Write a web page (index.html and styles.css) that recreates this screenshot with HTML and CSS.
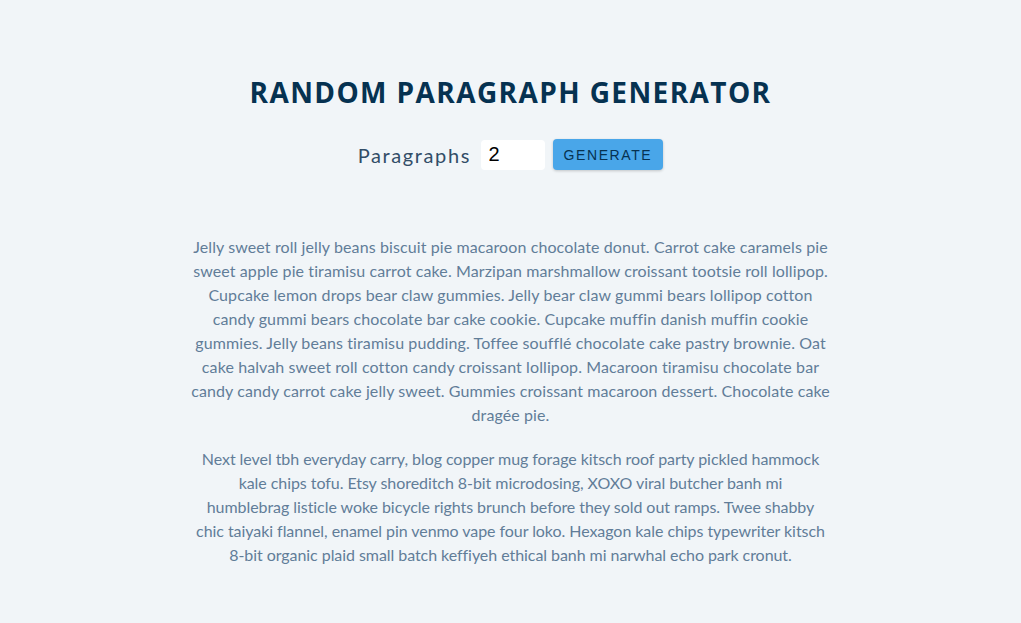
FILE: index.html
```html
<!DOCTYPE html>
<html lang="en">
<head>
<meta charset="utf-8">
<title>Random Paragraph Generator</title>
<link rel="stylesheet" href="styles.css">
</head>
<body>
<section class="section-center">
  <h3 class="title">Random Paragraph Generator</h3>
  <form class="lorem-form">
    <label for="amount" class="label">Paragraphs</label>
    <input type="number" id="amount" class="amount" value="2">
    <button type="button" class="btn">Generate</button>
  </form>
  <article class="lorem-text">
    <p>Jelly sweet roll jelly beans biscuit pie macaroon chocolate donut. Carrot cake caramels pie sweet apple pie tiramisu carrot cake. Marzipan marshmallow croissant tootsie roll lollipop. Cupcake lemon drops bear claw gummies. Jelly bear claw gummi bears lollipop cotton candy gummi bears chocolate bar cake cookie. Cupcake muffin danish muffin cookie gummies. Jelly beans tiramisu pudding. Toffee soufflé chocolate cake pastry brownie. Oat cake halvah sweet roll cotton candy croissant lollipop. Macaroon tiramisu chocolate bar candy candy carrot cake jelly sweet. Gummies croissant macaroon dessert. Chocolate cake dragée pie.</p>
    <p>Next level tbh everyday carry, blog copper mug forage kitsch roof party pickled hammock kale chips tofu. Etsy shoreditch 8-bit microdosing, XOXO viral butcher banh mi<br>humblebrag listicle woke bicycle rights brunch before they sold out ramps. Twee shabby<br>chic taiyaki flannel, enamel pin venmo vape four loko. Hexagon kale chips typewriter kitsch 8-bit organic plaid small batch keffiyeh ethical banh mi narwhal echo park cronut.</p>
  </article>
</section>
</body>
</html>
```

FILE: styles.css
```css
* { box-sizing: border-box; margin: 0; padding: 0; }

body {
  background: #f1f5f8;
  font-family: Lato, "Open Sans", sans-serif;
  font-size: 16px;
  line-height: 1.5;
  color: #102a42;
}

.section-center {
  width: 90vw;
  max-width: 40rem;
  margin: 0 auto;
  padding-top: 74px;
  text-align: center;
}

.title {
  font-family: "Open Sans", "Noto Sans", sans-serif;
  font-size: 28px;
  line-height: 36px;
  font-weight: 700;
  letter-spacing: 1.4px;
  text-transform: uppercase;
  color: #063251;
}

.lorem-form {
  display: flex;
  justify-content: center;
  align-items: center;
  margin-top: 29px;
  margin-bottom: 65px;
}

.label {
  font-size: 1.25rem;
  letter-spacing: 0.1rem;
  color: #324d67;
}

.amount {
  width: 4rem;
  height: 30px;
  padding: 0.25rem 0.5rem;
  margin: 0 0.5rem 0 0.6rem;
  border: none;
  border-radius: 0.25rem;
  background: #fff;
  font-family: "Liberation Sans", Arial, sans-serif;
  font-size: 1.25rem;
  color: #000;
}

.btn {
  height: 31px;
  padding: 0 11px;
  border: none;
  border-radius: 0.25rem;
  background: #49a6e9;
  color: #063251;
  font-family: "Liberation Sans", Arial, sans-serif;
  font-size: 0.875rem;
  letter-spacing: 0.1rem;
  text-transform: uppercase;
  box-shadow: 0 1px 3px rgba(0, 0, 0, 0.2);
  cursor: pointer;
}

.lorem-text p {
  color: #617d98;
  letter-spacing: 0.1px;
  margin-bottom: 1.25rem;
}

.lorem-text p + p {
  letter-spacing: -0.06px;
}
```
